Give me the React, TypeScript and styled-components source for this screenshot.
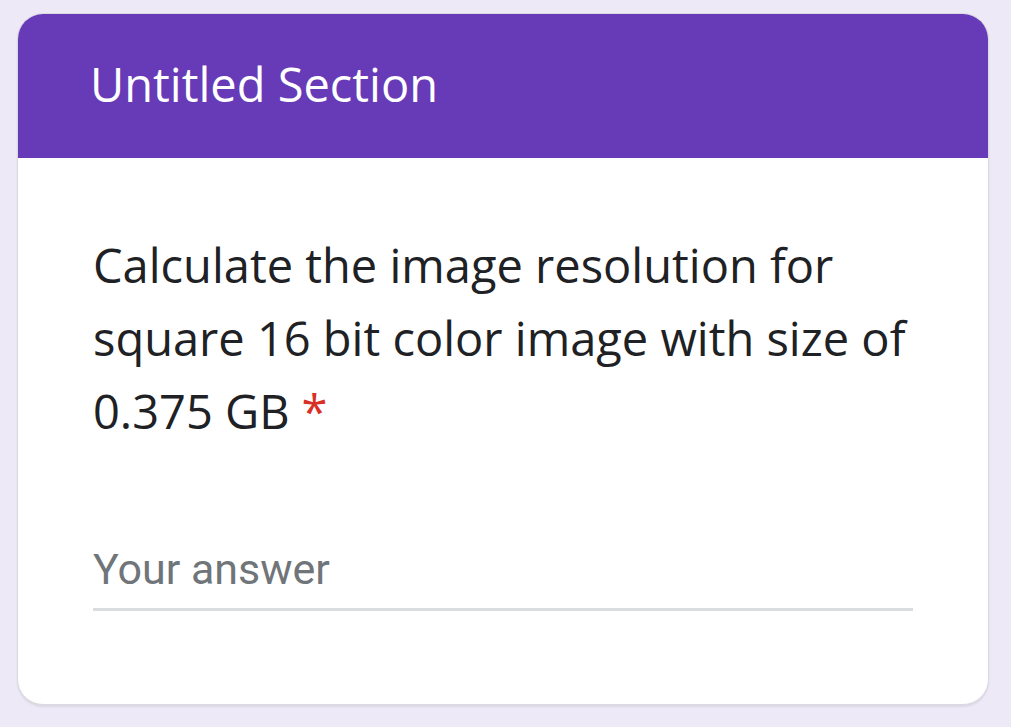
import React from "react";
import styled, { createGlobalStyle } from "styled-components";

const GlobalStyle = createGlobalStyle`
  html, body {
    margin: 0;
    padding: 0;
    background: #ede9f7;
  }
  body {
    font-family: "Open Sans", "Liberation Sans", sans-serif;
  }
`;

const Page = styled.div`
  padding: 13px 22px 22px 17px;
`;

const Card = styled.div`
  width: 972px;
  background: #ffffff;
  border-radius: 26px;
  border: 1px solid #dcdae0;
  box-shadow: 0 2px 2px rgba(0, 0, 0, 0.08);
  overflow: hidden;
  box-sizing: border-box;
`;

const Header = styled.div`
  height: 144px;
  background: #673ab7;
  display: flex;
  align-items: center;
  padding: 0 72px;
`;

const Title = styled.h1`
  margin: 0 0 4px;
  font-family: "Open Sans", sans-serif;
  font-weight: 400;
  font-size: 47px;
  color: #ffffff;
`;

const Body = styled.div`
  padding: 71px 75px 93px 75px;
`;

const Question = styled.div`
  font-family: "Open Sans", sans-serif;
  font-size: 47px;
  line-height: 73px;
  color: #202124;
`;

const Required = styled.span`
  color: #d93025;
  margin-left: 12px;
`;

const Answer = styled.div`
  margin-top: 96px;
  padding-bottom: 14px;
  border-bottom: 3px solid #dadce0;
  font-family: "Roboto", sans-serif;
  font-size: 43px;
  line-height: 50px;
  color: #70757a;
`;

export default function App() {
  return (
    <>
      <GlobalStyle />
      <Page>
        <Card>
          <Header>
            <Title>Untitled Section</Title>
          </Header>
          <Body>
            <Question>
              Calculate the image resolution for
              <br />
              square 16 bit color image with size of
              <br />
              0.375 GB<Required>*</Required>
            </Question>
            <Answer>Your answer</Answer>
          </Body>
        </Card>
      </Page>
    </>
  );
}
